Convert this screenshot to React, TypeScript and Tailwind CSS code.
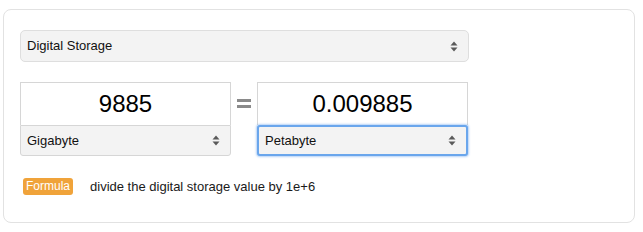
const font = { fontFamily: '"Liberation Sans", Arial, sans-serif' };

function Arrows() {
  return (
    <svg width="8" height="11" viewBox="0 0 8 11" className="shrink-0">
      <path d="M4 0.5 L7.5 4.5 L0.5 4.5 Z" fill="#5a5a5a" />
      <path d="M4 10.5 L7.5 6.5 L0.5 6.5 Z" fill="#5a5a5a" />
    </svg>
  );
}

function SelectBox({ label, className }: { label: string; className: string }) {
  return (
    <div className={`flex items-center justify-between bg-[#f3f3f3] pl-[6px] pr-[10px] text-[13px] text-[#111] ${className}`}>
      <span>{label}</span>
      <Arrows />
    </div>
  );
}

function UnitBox({ value, unit, focused }: { value: string; unit: string; focused?: boolean }) {
  return (
    <div className="flex w-[211px] flex-col">
      <div className="flex h-[43px] items-center justify-center border border-b-0 border-[#d6d6d6] bg-white text-[24px] text-black">
        {value}
      </div>
      {focused ? (
        <SelectBox
          label={unit}
          className="h-[31px] rounded-[3px] border-2 border-[#6aa6ec] shadow-[0_0_2px_1px_rgba(90,155,235,0.45)]"
        />
      ) : (
        <SelectBox label={unit} className="h-[31px] rounded-b-[3px] border border-[#d6d6d6]" />
      )}
    </div>
  );
}

export default function App() {
  return (
    <div className="h-[232px] w-[643px] bg-white pl-[3px] pt-[9px]" style={font}>
      <div className="h-[214px] w-[632px] rounded-[8px] border border-[#e2e2e2] px-4 pt-5">
        <SelectBox label="Digital Storage" className="h-[32px] w-[449px] rounded-[5px] border border-[#dedede]" />
        <div className="mt-[20px] flex items-start">
          <UnitBox value="9885" unit="Gigabyte" />
          <div className="flex h-[43px] w-[26px] items-center justify-center">
            <div className="flex w-[14px] flex-col gap-[3px]">
              <div className="h-[3px] bg-[#8a8a8a]" />
              <div className="h-[3px] bg-[#8a8a8a]" />
            </div>
          </div>
          <UnitBox value="0.009885" unit="Petabyte" focused />
        </div>
        <div className="mt-[21px] flex items-center pl-[3px]">
          <span className="rounded-[3px] bg-[#f0a33a] px-[3px] py-[1px] text-[12px] leading-[15px] text-white">
            Formula
          </span>
          <span className="ml-[17px] text-[13px] text-[#1a1a1a]">divide the digital storage value by 1e+6</span>
        </div>
      </div>
    </div>
  );
}
